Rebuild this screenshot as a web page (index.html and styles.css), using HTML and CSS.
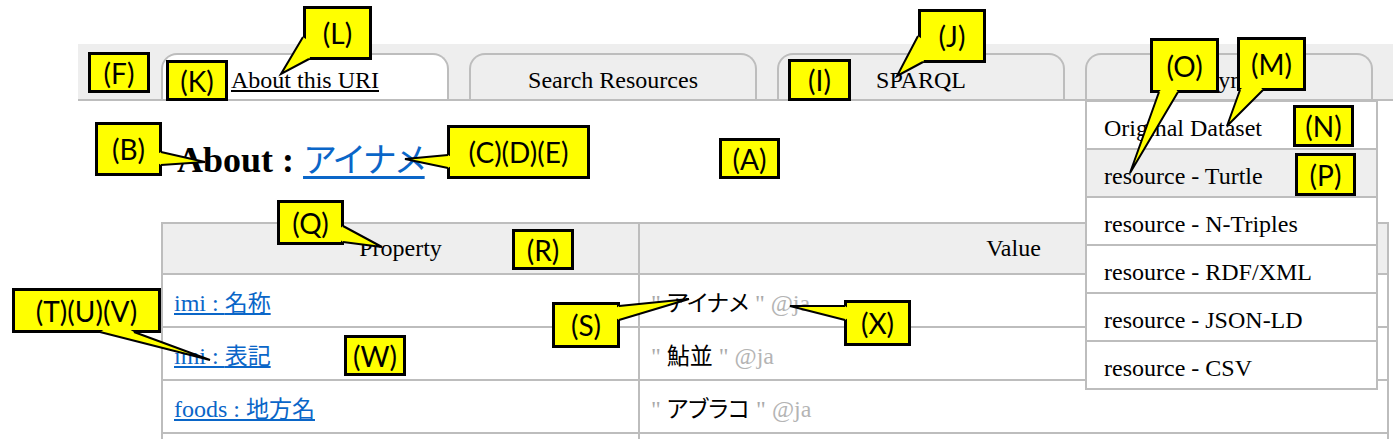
FILE: index.html
```html
<!DOCTYPE html>
<html lang="ja">
<head>
<meta charset="utf-8">
<title>About : アイナメ</title>
<link rel="stylesheet" href="styles.css">
</head>
<body>
<div class="page">
  <nav class="tabbar">
    <div class="tab active"><a href="#" class="tab-link">About this URI</a></div>
    <div class="tab">Search Resources</div>
    <div class="tab">SPARQL</div>
    <div class="tab tab-menu">Sync
      <ul class="menu">
        <li class="menu-item">Original Dataset</li>
        <li class="menu-item hover">resource - Turtle</li>
        <li class="menu-item">resource - N-Triples</li>
        <li class="menu-item">resource - RDF/XML</li>
        <li class="menu-item">resource - JSON-LD</li>
        <li class="menu-item">resource - CSV</li>
      </ul>
    </div>
  </nav>

  <main class="content">
    <h1 class="title">About : <a href="#" class="title-link">アイナメ</a></h1>
    <table class="props">
      <thead>
        <tr><th class="col-prop">Property</th><th>Value</th></tr>
      </thead>
      <tbody>
        <tr><td><a href="#" class="plink">imi : <span class="ja">名称</span></a></td><td><span class="q">"</span> <span class="ja">アイナメ</span> <span class="q">"</span> <span class="lang">@ja</span></td></tr>
        <tr><td><a href="#" class="plink">imi : <span class="ja">表記</span></a></td><td><span class="q">"</span> <span class="ja">鮎並</span> <span class="q">"</span> <span class="lang">@ja</span></td></tr>
        <tr><td><a href="#" class="plink">foods : <span class="ja">地方名</span></a></td><td><span class="q">"</span> <span class="ja">アブラコ</span> <span class="q">"</span> <span class="lang">@ja</span></td></tr>
        <tr><td></td><td></td></tr>
      </tbody>
    </table>
  </main>

  <div class="callouts">
    <div class="co co-a">(A)</div>
    <div class="co co-b">(B)</div>
    <div class="co co-cde">(C)(D)(E)</div>
    <div class="co co-f">(F)</div>
    <div class="co co-i">(I)</div>
    <div class="co co-j">(J)</div>
    <div class="co co-k">(K)</div>
    <div class="co co-l">(L)</div>
    <div class="co co-m">(M)</div>
    <div class="co co-n">(N)</div>
    <div class="co co-o">(O)</div>
    <div class="co co-p">(P)</div>
    <div class="co co-q">(Q)</div>
    <div class="co co-r">(R)</div>
    <div class="co co-s">(S)</div>
    <div class="co co-tuv">(T)(U)(V)</div>
    <div class="co co-w">(W)</div>
    <div class="co co-x">(X)</div>
    <svg class="tails" width="1393" height="439" viewBox="0 0 1393 439">
      <g class="tail-fill">
        <polygon points="303,37 281,74 309,59 316,46"/>
        <polygon points="918,36 897,76 923,62 931,46"/>
        <polygon points="1159,92 1130,173 1178,92 1169,80"/>
        <polygon points="1240,90 1227,126 1263,90 1252,78"/>
        <polygon points="161,152 205,162 161,165 150,158"/>
        <polygon points="448,155 405,159 448,168 459,161"/>
        <polygon points="343,226 382,247 343,242 333,234"/>
        <polygon points="100,332 210,360 134,332 117,322"/>
        <polygon points="619,306 689,299 619,320 609,313"/>
        <polygon points="845,306 790,306 845,320 855,313"/>
      </g>
      <g class="tail-line">
        <polyline points="303,37 281,74 309,59"/>
        <polyline points="918,36 897,76 923,62"/>
        <polyline points="1159,92 1130,173 1178,92"/>
        <polyline points="1240,90 1227,126 1263,90"/>
        <polyline points="161,152 205,162 161,165"/>
        <polyline points="448,155 405,159 448,168"/>
        <polyline points="343,226 382,247 343,242"/>
        <polyline points="100,332 210,360 134,332"/>
        <polyline points="619,306 689,299 619,320"/>
        <polyline points="845,306 790,306 845,320"/>
      </g>
    </svg>
  </div>
</div>
</body>
</html>
```

FILE: styles.css
```css
html, body {
  margin: 0;
  padding: 0;
  overflow: hidden;
  background: #ffffff;
}

body {
  font-family: "Liberation Serif", "Noto Sans CJK JP", serif;
  font-size: 24px;
  color: #000;
}

.page {
  position: relative;
  width: 1393px;
  height: 439px;
  padding-top: 44px;
  box-sizing: border-box;
}

/* ---------- tabs ---------- */
.tabbar {
  margin-left: 78px;
  height: 55px;
  padding-left: 83px;
  background: #eeeeee;
  border-bottom: 2px solid #bdbdbd;
  display: flex;
  align-items: flex-end;
  gap: 20px;
}

.tab {
  box-sizing: border-box;
  width: 288px;
  height: 46px;
  padding-top: 12px;
  border: 2px solid #bdbdbd;
  border-bottom: 0;
  border-radius: 16px 16px 0 0;
  background: #eeeeee;
  text-align: center;
  line-height: 26px;
  white-space: nowrap;
  flex: none;
}

.tab.active {
  background: #ffffff;
}

.tab-link {
  color: #000;
  text-decoration: underline;
}

.tab-menu {
  position: relative;
}

.menu {
  position: absolute;
  left: -2px;
  top: calc(100% + 1px);
  width: 293px;
  box-sizing: border-box;
  margin: 0;
  padding: 0;
  list-style: none;
  background: #ffffff;
  border: 2px solid #bdbdbd;
  border-bottom: 0;
  text-align: left;
  z-index: 5;
}

.menu-item {
  height: 38px;
  padding: 8px 0 0 17px;
  line-height: 36px;
  border-bottom: 2px solid #bdbdbd;
  white-space: nowrap;
}

.menu-item.hover {
  background: #eeeeee;
}

/* ---------- content ---------- */
.content {
  padding-left: 161px;
}

.title {
  margin: 36px 0 41px 16px;
  font-size: 36px;
  line-height: 42px;
  font-weight: bold;
}

.title-link {
  color: #0a66c8;
  font-family: "Noto Sans CJK JP", sans-serif;
  font-weight: normal;
  font-size: 34px;
  letter-spacing: -3px;
  text-decoration-thickness: 3px;
  text-underline-offset: 4px;
}

.props {
  width: 1228px;
  border-collapse: collapse;
  border: 2px solid #bdbdbd;
}

.props th {
  height: 49px;
  background: #eeeeee;
  font-weight: normal;
  text-align: center;
  border: 2px solid #bdbdbd;
  padding: 0;
}

.props .col-prop {
  width: 475px;
}

.props td {
  height: 51px;
  padding: 0 0 0 11px;
  border: 2px solid #bdbdbd;
  vertical-align: middle;
  white-space: nowrap;
}

.plink {
  color: #0a66c8;
  text-decoration: underline;
}

.ja {
  font-family: "Noto Sans CJK JP", sans-serif;
  font-size: 23px;
  font-feature-settings: "palt";
}

.q {
  color: #aaaaaa;
}

.lang {
  color: #b4b4b4;
}

/* ---------- callouts (annotation overlay) ---------- */
.callouts {
  position: absolute;
  left: 0;
  top: 0;
  width: 1393px;
  height: 439px;
  pointer-events: none;
  z-index: 10;
}

.co {
  position: absolute;
  box-sizing: border-box;
  background: #ffff00;
  border: 3px solid #000;
  font-family: "Lato", "Open Sans", sans-serif;
  font-size: 28px;
  color: #000;
  display: flex;
  align-items: center;
  justify-content: center;
  white-space: nowrap;
}

.co-a   { left: 719px;  top: 138px; width: 61px;  height: 41px; }
.co-b   { left: 95px;   top: 122px; width: 67px;  height: 54px; }
.co-cde { left: 447px;  top: 125px; width: 143px; height: 54px; }
.co-f   { left: 88px;   top: 52px;  width: 62px;  height: 41px; }
.co-i   { left: 788px;  top: 59px;  width: 63px;  height: 42px; }
.co-j   { left: 918px;  top: 9px;   width: 68px;  height: 54px; }
.co-k   { left: 166px;  top: 60px;  width: 62px;  height: 41px; }
.co-l   { left: 303px;  top: 6px;   width: 69px;  height: 54px; }
.co-m   { left: 1237px; top: 37px;  width: 69px;  height: 54px; }
.co-n   { left: 1293px; top: 105px; width: 61px;  height: 42px; }
.co-o   { left: 1150px; top: 38px;  width: 69px;  height: 55px; }
.co-p   { left: 1295px; top: 153px; width: 61px;  height: 43px; }
.co-q   { left: 277px;  top: 200px; width: 67px;  height: 45px; }
.co-r   { left: 512px;  top: 229px; width: 62px;  height: 41px; }
.co-s   { left: 552px;  top: 302px; width: 68px;  height: 46px; }
.co-tuv { left: 12px;   top: 288px; width: 149px; height: 45px; }
.co-w   { left: 344px;  top: 335px; width: 62px;  height: 41px; }
.co-x   { left: 844px;  top: 300px; width: 67px;  height: 46px; }

.tails {
  position: absolute;
  left: 0;
  top: 0;
}

.tail-fill polygon {
  fill: #ffff00;
  stroke: none;
}

.tail-line polyline {
  fill: none;
  stroke: #000;
  stroke-width: 2;
  stroke-linejoin: miter;
}
```
